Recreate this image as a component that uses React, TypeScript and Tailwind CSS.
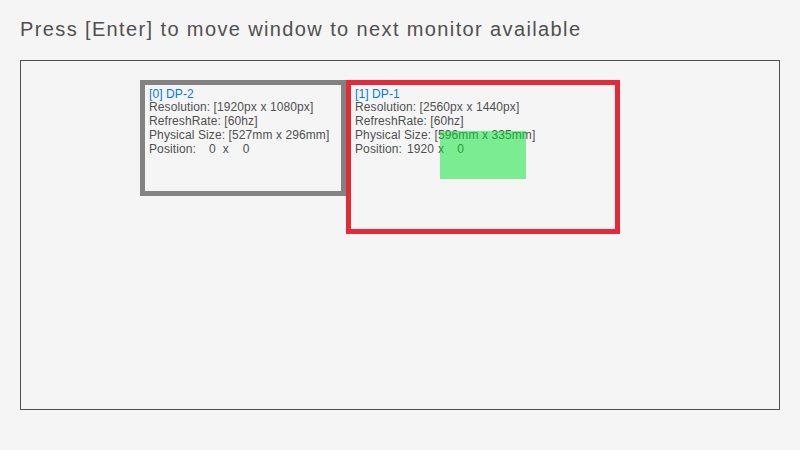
export default function App() {
  const font = { fontFamily: '"Liberation Sans", Arial, sans-serif' };
  return (
    <div className="w-[800px] h-[450px] bg-[#f5f5f5] text-[#505050] overflow-hidden" style={font}>
      <div className="pl-[20px] pt-[17px] h-[60px] text-[20px] leading-[24px] tracking-[1.38px]">
        Press [Enter] to move window to next monitor available
      </div>
      <div className="ml-[20px] w-[760px] h-[350px] border border-[#505050] relative">
        <div className="absolute left-[119px] top-[19px] w-[206px] h-[116px] border-[5px] border-[#828282] pl-[4px] pt-[4px] text-[12px] leading-[14px] tracking-[0.1px]">
          <div className="text-[#0079f1] h-[11px] leading-[11px]">[0] DP-2</div>
          <div>Resolution: [1920px x 1080px]</div>
          <div>RefreshRate: [60hz]</div>
          <div>Physical Size: [527mm x 296mm]</div>
          <div className="flex">
            <span>Position:</span>
            <span className="ml-[13px]">0</span>
            <span className="ml-[7px]">x</span>
            <span className="ml-[14px]">0</span>
          </div>
        </div>
        <div className="absolute left-[325px] top-[19px] w-[274px] h-[154px] border-[5px] border-[#e62937] pl-[4px] pt-[4px] text-[12px] leading-[14px] tracking-[0.1px]">
          <div className="text-[#0079f1] h-[11px] leading-[11px]">[1] DP-1</div>
          <div>Resolution: [2560px x 1440px]</div>
          <div>RefreshRate: [60hz]</div>
          <div>Physical Size: [596mm x 335mm]</div>
          <div className="flex">
            <span>Position:</span>
            <span className="ml-[5px]">1920</span>
            <span className="ml-[4px]">x</span>
            <span className="ml-[13px]">0</span>
          </div>
        </div>
        <div className="absolute left-[419px] top-[70px] w-[86px] h-[48px] bg-[rgba(0,228,48,0.5)]" />
      </div>
    </div>
  );
}
